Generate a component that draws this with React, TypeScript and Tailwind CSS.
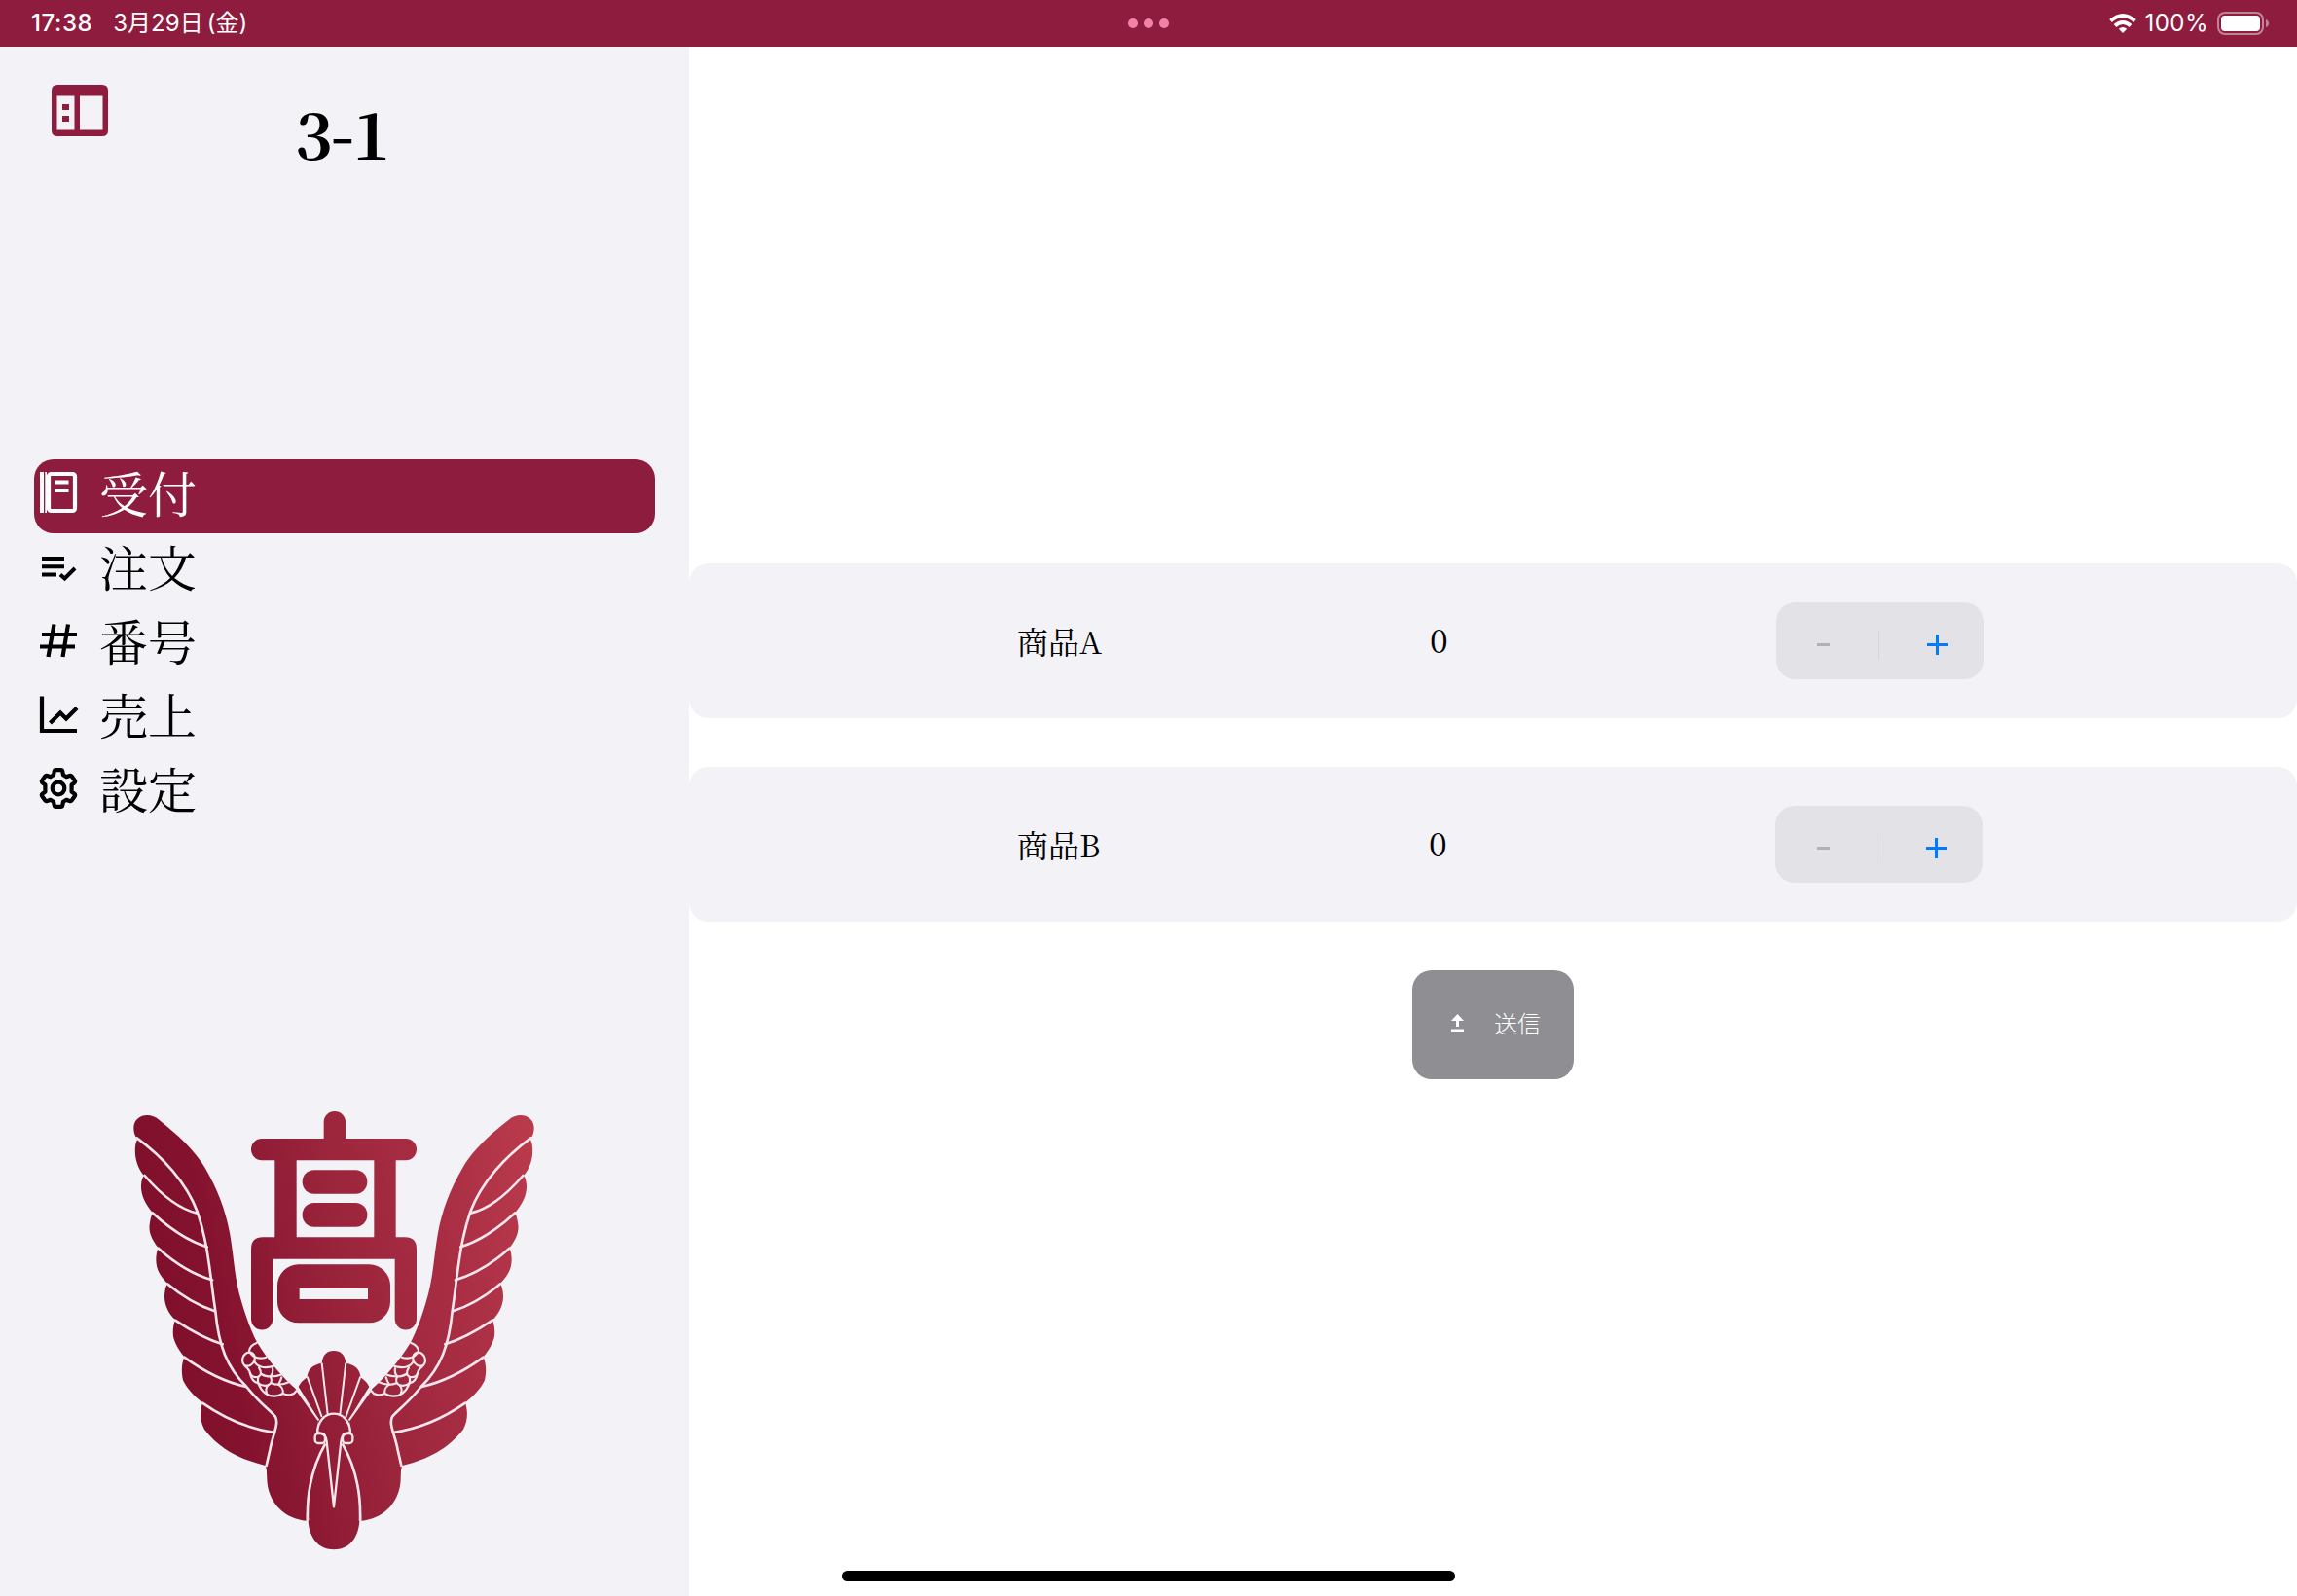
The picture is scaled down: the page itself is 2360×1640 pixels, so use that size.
import React from "react";

const CREST = "url(#crest)";
const LINE = "#f4e6ec";

const WING =
  "M52 118C52 78 100 66 130 92C190 140 240 185 272 240C310 305 335 370 348 440C362 520 362 580 385 655C400 705 415 745 432 778C470 840 510 885 555 925L622 1015L615 1060L645 1088C610 1150 585 1240 584 1328C515 1322 465 1270 463 1200C462 1170 462 1170 458 1158C380 1138 318 1108 270 1046C255 1018 256 990 264 964C240 945 215 920 204 895C198 865 200 845 208 823C190 800 178 780 174 760C172 740 174 725 180 709C160 690 148 665 147 640C147 620 150 608 156 596C134 574 122 555 121 525C121 510 123 498 128 487C108 462 98 440 101 415C103 400 106 388 110 378C88 352 74 325 75 295C76 280 78 272 84 264C62 238 54 205 57 175C58 165 60 158 64 152C56 142 52 132 52 118Z";

function WingLines() {
  return (
    <g fill="none" stroke={LINE} strokeLinecap="round" strokeLinejoin="round">
      <g strokeWidth="8">
        <path d="M62 148C140 205 215 285 248 375C284 480 288 580 304 682C314 790 340 855 400 915C440 965 470 985 488 1006C502 1026 480 1065 472 1110L461 1158" />
        <path d="M86 264C130 315 185 366 248 380" />
        <path d="M110 379C160 425 220 466 278 484" />
        <path d="M128 488C180 535 240 570 294 586" />
        <path d="M156 598C200 635 250 665 302 682" />
        <path d="M180 710C225 740 280 770 326 784" />
        <path d="M208 824C265 865 330 900 398 915" />
        <path d="M264 965C335 1015 410 1045 486 1056" />
      </g>
      <g strokeWidth="6.500">
        <path d="M431 780C414 786 408 797 408 808C386 814 382 838 394 850C402 856 408 862 410 870C414 892 424 902 436 904C446 930 464 944 486 944C500 944 506 940 512 936C530 944 546 940 553 928" />
        <path d="M408 808C422 810 428 820 424 834C420 846 408 854 396 850" />
        <path d="M412 812C422 824 436 832 460 824" />
        <path d="M424 836C430 852 452 862 488 850" />
        <path d="M438 856C446 868 446 880 436 884C424 888 414 882 410 872" />
        <path d="M446 876C460 886 486 886 512 876" />
        <path d="M480 858C482 868 480 876 474 882" />
        <path d="M474 884C480 896 476 906 466 910C454 914 444 910 436 904" />
        <path d="M436 884C434 892 434 898 436 904" />
        <path d="M476 904C490 910 510 910 532 900" />
        <path d="M508 886C506 894 502 902 498 908C508 914 514 926 512 936" />
        <path d="M466 910C460 918 458 926 462 934" />
      </g>
    </g>
  );
}

function Crest() {
  return (
    <svg width="440" height="490" viewBox="0 0 1320 1470">
      <defs>
        <linearGradient id="crest" gradientUnits="userSpaceOnUse" x1="90" y1="500" x2="1290" y2="250">
          <stop offset="0" stopColor="#7e0f2a" />
          <stop offset="0.15" stopColor="#84122e" />
          <stop offset="0.5" stopColor="#9b253c" />
          <stop offset="0.78" stopColor="#ab2f45" />
          <stop offset="1" stopColor="#b93a4b" />
        </linearGradient>
        <linearGradient id="crestFlip" gradientUnits="userSpaceOnUse" x1="1248" y1="500" x2="48" y2="250">
          <stop offset="0" stopColor="#7e0f2a" />
          <stop offset="0.15" stopColor="#84122e" />
          <stop offset="0.5" stopColor="#9b253c" />
          <stop offset="0.78" stopColor="#ab2f45" />
          <stop offset="1" stopColor="#b93a4b" />
        </linearGradient>
      </defs>
      <path d={WING} fill={CREST} />
      <WingLines />
      <g transform="translate(1338 0) scale(-1 1)">
        <path d={WING} fill="url(#crestFlip)" />
        <WingLines />
      </g>
      <g fill={CREST}>
        <rect x="638" y="66" width="67" height="120" rx="33" />
        <rect x="414" y="150" width="510" height="67" rx="33" />
        <rect x="487" y="190" width="67" height="300" />
        <rect x="793" y="190" width="67" height="300" />
        <rect x="572" y="247" width="200" height="73" rx="36" />
        <rect x="572" y="348" width="200" height="74" rx="36" />
        <path d="M450 454H888Q924 454 924 490V706A33.500 33.500 0 0 1 857 706V521H481V706A33.500 33.500 0 0 1 414 706V490Q414 454 450 454Z" />
        <path fillRule="evenodd" d="M560 538H778A65 65 0 0 1 843 603V653A65 65 0 0 1 778 718H560A65 65 0 0 1 495 653V603A65 65 0 0 1 560 538ZM563 612V645H774V612Z" />
      </g>
      <path d="M645 1080C605 1150 585 1240 590 1330C594 1385 625 1417 669 1417C713 1417 744 1385 748 1330C753 1240 733 1150 693 1080Z" fill={CREST} />
      <path d="M622 1015L560 915Q568 898 587 886Q588 850 632 842Q636 804 669 804Q702 804 706 842Q750 850 751 886Q770 898 778 915L716 1015L724 1085H614Z" fill={CREST} />
      <g fill="none" stroke={LINE} strokeWidth="7" strokeLinejoin="round">
        <path d="M553 922L622 1018M785 922L716 1018M587 884L632 1008M751 884L706 1008M632 842L650 1000M706 842L688 1000" strokeWidth="6" />
        <path d="M618 1058C620 978 718 978 720 1058" />
        <rect x="611" y="1059" width="31" height="30" rx="10" />
        <rect x="696" y="1059" width="31" height="30" rx="10" />
        <path d="M618 1056Q645 1058 647 1084L669 1285L691 1084Q693 1058 720 1056" />
        <path d="M643 1090C603 1160 585 1240 588 1328M695 1090C735 1160 753 1240 750 1328" strokeWidth="8" />
      </g>
    </svg>
  );
}

const nav = [
  {
    label: "受付",
    icon: (
      <>
        <path d="M1 5H5V47H1ZM6.300 5H8V47H6.300Z" fill="currentColor" />
        <rect x="10" y="7" width="27" height="38" rx="2.500" fill="none" stroke="currentColor" strokeWidth="4.200" />
        <path d="M16 15.500H30.500M16 24H30.500" stroke="currentColor" strokeWidth="4" />
      </>
    ),
  },
  {
    label: "注文",
    icon: <path d="M3 18H26M3 26.200H26M3 34.500H18M22 34.500L26.500 38.500L37 28" fill="none" stroke="currentColor" strokeWidth="4" />,
  },
  {
    label: "番号",
    icon: <path d="M3 20H39M1 32.500H37M15.500 9.500L9.500 43M30 9.500L24.500 43" fill="none" stroke="currentColor" strokeWidth="4.200" />,
  },
  {
    label: "売上",
    icon: <path d="M3 7.500V43H39M11.500 35L22 24.500L28 30.500L39 19.500" fill="none" stroke="currentColor" strokeWidth="4.200" />,
  },
  {
    label: "設定",
    icon: (
      <g fill="none" stroke="currentColor" strokeWidth="4.200" strokeLinejoin="round">
        <circle cx="20" cy="26" r="6.300" />
        <path d="M17.500 7.200H22.500Q24 7.200 24.300 8.700L25 12.300L28.200 14.200L31.500 13Q33 12.500 33.800 13.800L36.800 18Q37.600 19.300 36.400 20.300L33.600 22.500V29.500L36.400 31.700Q37.600 32.700 36.800 34L33.800 38.200Q33 39.500 31.500 39L28.200 37.800L25 39.700L24.300 43.300Q24 44.800 22.500 44.800H17.500Q16 44.800 15.700 43.300L15 39.700L11.800 37.800L8.500 39Q7 39.500 6.200 38.200L3.200 34Q2.400 32.700 3.600 31.700L6.400 29.500V22.500L3.600 20.300Q2.400 19.300 3.200 18L6.200 13.800Q7 12.500 8.500 13L11.800 14.200L15 12.300L15.700 8.700Q16 7.200 17.500 7.200Z" />
      </g>
    ),
  },
];

function Item({ name, narrow }: { name: string; narrow?: boolean }) {
  return (
    <div className="flex h-[159px] items-center rounded-[20px] bg-[#f2f2f7] pl-[337px]">
      <div className={narrow ? "w-[423px] pb-[2px] text-[32px] leading-none" : "w-[424px] pb-[2px] text-[32px] leading-none"}>{name}</div>
      <div className="w-[356px] pb-[3px] text-[34px] leading-none">0</div>
      <div className="flex h-[79px] w-[213px] items-center rounded-[20px] bg-[#e2e2e7] pt-2">
        <div className={narrow ? "ml-[43px] h-[3px] w-[13px] bg-[#b1b1b5]" : "ml-[42px] h-[3px] w-[13px] bg-[#b1b1b5]"} />
        <div className={narrow ? "ml-[49px] h-[30px] w-px bg-[#d5d5d9]" : "ml-[50px] h-[30px] w-px bg-[#d5d5d9]"} />
        <svg className="ml-[49px]" width="21" height="21" viewBox="0 0 21 21">
          <path d="M0 10.500H21M10.500 0V21" stroke="#007aff" strokeWidth="3" />
        </svg>
      </div>
    </div>
  );
}

export default function App() {
  return (
    <div className="flex h-[1640px] w-[2360px] flex-col overflow-hidden bg-white font-['Noto_Serif_CJK_JP','Noto_Sans_CJK_JP','Liberation_Serif',serif] text-black">
      <header className="grid h-12 shrink-0 grid-cols-3 items-center bg-[#8e1c3e] pl-8 pr-[29px] font-[Inter,'Noto_Sans_CJK_JP',sans-serif] text-[24px] leading-none text-white">
        <div className="flex">
          <span className="font-medium tracking-[0.6px]">17:38</span>
          <span className="ml-[21px]">3月29日</span>
          <span className="ml-[4px]">(金)</span>
        </div>
        <div className="flex justify-center gap-[6px] pr-[3px]">
          <i className="size-[10px] rounded-full bg-[#f283a8]" />
          <i className="size-[10px] rounded-full bg-[#f283a8]" />
          <i className="size-[10px] rounded-full bg-[#f283a8]" />
        </div>
        <div className="flex items-center justify-end">
          <svg width="28" height="22" viewBox="0 0 28 22" fill="none" stroke="white" strokeWidth="4">
            <path d="M1.500 8.500Q14-2.500 26.500 8.500M6 13.500Q14 6.500 22 13.500" />
            <path d="M14 21L9.800 16.700Q14 13.400 18.200 16.700Z" fill="white" stroke="none" />
          </svg>
          <span className="ml-[8px] mr-[9px] tracking-[0.5px]">100%</span>
          <svg width="53" height="24" viewBox="0 0 53 24">
            <rect x="1" y="1" width="46" height="22" rx="7" fill="none" stroke="#c2839a" strokeWidth="2" />
            <rect x="4" y="4" width="40" height="16" rx="4" fill="white" />
            <path d="M50 8Q53 9 53 12T50 16Z" fill="#c2839a" />
          </svg>
        </div>
      </header>
      <div className="flex min-h-0 flex-1">
        <aside className="flex w-[708px] shrink-0 flex-col bg-[#f2f2f7]">
          <div className="flex h-[424px] pl-[53px] pt-[39px]">
            <svg width="58" height="53" viewBox="0 0 58 53" fill="#8e1c3e">
              <path fillRule="evenodd" d="M6 0H52Q58 0 58 6V47Q58 53 52 53H6Q0 53 0 47V6Q0 0 6 0ZM5.500 11.500V46.500H23.500V11.500ZM29 11.500V46.500H52.500V11.500Z" />
              <path d="M11 20H18V26H11ZM11 32H18V38H11Z" />
            </svg>
            <h1 className="ml-[192px] mt-[16px] text-[66px] font-bold leading-none tracking-[-2px]">3-1</h1>
          </div>
          <nav className="px-[35px]">
            {nav.map((n, i) => (
              <div key={n.label} className={i === 0 ? "flex h-[76px] rounded-[20px] bg-[#8e1c3e] text-white" : "flex h-[76px] text-black"}>
                <svg className="ml-[5px] mt-[8px] shrink-0" width="42" height="52" viewBox="0 0 42 52">{n.icon}</svg>
                <span className="ml-[20px] mt-[7px] text-[50px] leading-[52px]">{n.label}</span>
              </div>
            ))}
          </nav>
          <div className="ml-[120px] mt-[268px]">
            <Crest />
          </div>
        </aside>
        <main className="flex flex-1 flex-col pt-[531px]">
          <Item name="商品A" />
          <div className="h-[50px]" />
          <Item name="商品B" narrow />
          <button className="ml-[743px] mt-[50px] flex h-[112px] w-[166px] items-center rounded-[20px] bg-[#8e8e93] pb-[4px] pl-10 font-['Noto_Sans_CJK_JP',sans-serif] text-[24px] font-light text-white">
            <svg width="13" height="18" viewBox="0 0 13 18" fill="white">
              <path d="M6.500 0L13 7H8V13H5V7H0ZM0 15.500H13V18H0Z" />
            </svg>
            <span className="ml-[31px]">送信</span>
          </button>
          <div className="ml-[157px] mt-auto mb-[15px] h-[11px] w-[630px] rounded-full bg-black" />
        </main>
      </div>
    </div>
  );
}
